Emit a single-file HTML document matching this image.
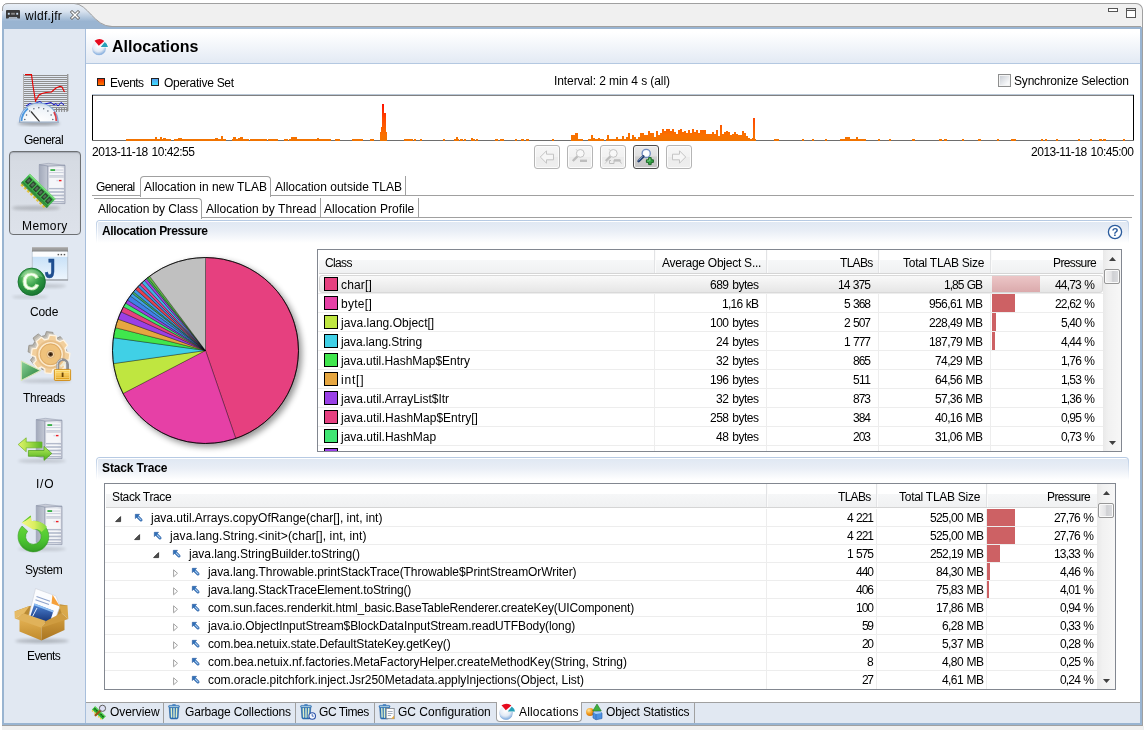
<!DOCTYPE html><html><head><meta charset="utf-8"><title>wldf.jfr - Allocations</title><style>
html,body{margin:0;padding:0;background:#fff}
body{width:1146px;height:732px;position:relative;overflow:hidden;font:12px "Liberation Sans",sans-serif;color:#000}
.a{position:absolute}
.t{position:absolute;white-space:pre;line-height:14px;height:14px;will-change:transform}
.b{font-weight:bold}
svg{position:absolute;overflow:visible}
</style></head><body>
<div class="a" style="left:2px;top:726px;width:1142px;height:4px;background:#f0f0f0;"></div>
<div class="a" style="left:2px;top:3px;width:1140px;height:24px;background:#f0f0f0;border-top:1px solid #a0a0a0;border-right:1px solid #a0a0a0;border-radius:6px 7px 0 0;height:23px"></div>
<div class="a" style="left:100px;top:26px;width:1041px;height:1px;background:#a0a0a0;"></div>
<div class="a" style="left:1142px;top:10px;width:1px;height:716px;background:#a0a0a0;"></div>
<div class="a" style="left:2px;top:725px;width:1141px;height:1px;background:#a0a0a0;"></div>
<div class="a" style="left:2px;top:27px;width:1140px;height:698px;background:#99b4d1;"></div>
<div class="a" style="left:4px;top:29px;width:81px;height:694px;background:#e1e8f2;"></div>
<div class="a" style="left:85px;top:29px;width:1px;height:694px;background:#a8bfdc;"></div>
<div class="a" style="left:86px;top:29px;width:1054px;height:673px;background:#fff;"></div>
<div class="a" style="left:86px;top:29px;width:1054px;height:34px;background:linear-gradient(#ffffff 10%,#e3eaf4 100%);"></div>
<div class="a" style="left:86px;top:63px;width:1054px;height:1px;background:#b4c8e1;"></div>
<div class="a" style="left:86px;top:702px;width:1054px;height:1px;background:#a0a0a0;"></div>
<div class="a" style="left:86px;top:703px;width:1054px;height:20px;background:#e1e8f2;"></div>
<svg style="left:2px;top:3px" width="116" height="26" viewBox="0 0 116 26">
<defs><linearGradient id="tg" x1="0" y1="0" x2="0" y2="1"><stop offset="0" stop-color="#e9eff7"/><stop offset="0.3" stop-color="#d9e3ef"/><stop offset="0.7" stop-color="#99b4d1"/><stop offset="1" stop-color="#99b4d1"/></linearGradient></defs>
<path d="M0 26 L0 6 Q0 0.5 6 0.5 L72 0.5 C86 0.5 92 23.5 110 23.5 L116 23.5 L116 26 Z" fill="url(#tg)"/>
<path d="M0.5 8 L0.5 6 Q0.5 0.5 6 0.5 L72 0.5 C86 0.5 92 23.5 110 23.5 L116 23.5" fill="none" stroke="#a0a0a0" stroke-width="1"/>
</svg>
<svg style="left:6px;top:10px" width="14" height="9.4" viewBox="0 0 15 10">
<path d="M1 0 H14 Q15 0 15 1 V9 H12.5 L11.5 7.5 H3.5 L2.5 9 H0 V1 Q0 0 1 0Z" fill="#3a3a3a"/>
<rect x="2" y="3" width="2" height="2" fill="#cfe3f7"/><rect x="11" y="3" width="2" height="2" fill="#cfe3f7"/><rect x="5.5" y="3" width="4" height="2" fill="#8a8a8a"/>
<path d="M3.5 9 L4.2 8 H10.8 L11.5 9Z" fill="#9a9a9a"/>
</svg>
<div class="t" style="top:9.14px;left:25.2px;letter-spacing:0.304px;">wldf.jfr</div>
<svg style="left:70px;top:10px" width="10" height="10" viewBox="0 0 10 10"><path d="M2 2 L8 8 M8 2 L2 8" stroke="#5a5a5a" stroke-width="3" stroke-linecap="square"/><path d="M2 2 L8 8 M8 2 L2 8" stroke="#fff" stroke-width="1.5" stroke-linecap="square"/></svg>
<svg style="left:1108px;top:8px" width="30" height="10" viewBox="0 0 30 10"><rect x="0.5" y="0.5" width="9" height="3" fill="#fff" stroke="#555"/><rect x="18.5" y="0.5" width="9" height="9" fill="#fff" stroke="#555"/><rect x="18.5" y="0.5" width="9" height="2" fill="#ddd" stroke="#555"/></svg>
<svg style="left:92px;top:39px" width="16" height="16" viewBox="0 0 16 16">
<defs><radialGradient id="pg" cx="0.45" cy="0.35" r="0.7"><stop offset="0" stop-color="#ffffff"/><stop offset="0.55" stop-color="#e2eaf5"/><stop offset="1" stop-color="#6f9fd6"/></radialGradient></defs>
<circle cx="7" cy="9.2" r="6.9" fill="url(#pg)"/>
<path d="M1.2 12.6 A6.9 6.9 0 0 0 12.9 12.4" fill="none" stroke="#8db5e4" stroke-width="0.9" opacity="0.9"/>
<path d="M6.8 6.7 L2.5 1.7 A8.5 8.5 0 0 1 12.4 1.9 Z" fill="#e60a1e" stroke="#ffffff" stroke-width="1.1" paint-order="stroke"/>
<path d="M8.7 7.9 L12.8 2.9 A8 8 0 0 1 16 7.9 Z" fill="#27a0b8" stroke="#ffffff" stroke-width="1.1" paint-order="stroke"/>
</svg>
<div class="t b" style="top:37.76px;font-size:16px;line-height:18px;height:18px;left:112.2px;letter-spacing:0.027px;">Allocations</div>
<div class="a" style="left:97px;top:78px;width:6px;height:6px;border:1px solid #222;background:linear-gradient(#f02800,#ff7a00)"></div>
<div class="t" style="top:76.14px;left:109.6px;letter-spacing:-0.517px;">Events</div>
<div class="a" style="left:151px;top:78px;width:6px;height:6px;border:1px solid #222;background:linear-gradient(#50a0f0,#40e0ff)"></div>
<div class="t" style="top:76.14px;left:164.4px;letter-spacing:-0.273px;">Operative Set</div>
<div class="t" style="top:74.14px;left:554.3px;letter-spacing:-0.085px;">Interval: 2 min 4 s (all)</div>
<div class="a" style="left:998px;top:74px;width:11px;height:11px;border:1px solid #8e8f8f;background:linear-gradient(135deg,#c4c9d1,#f8f9fa 78%);box-shadow:inset 0 0 0 1px #f4f4f4"></div>
<div class="t" style="top:74.14px;left:1014.3px;letter-spacing:-0.187px;">Synchronize Selection</div>
<div class="a" style="left:92px;top:94px;width:1042px;height:1px;background:#b9c7d6;"></div>
<div class="a" style="left:92px;top:95px;width:1042px;height:1px;background:#808080;"></div>
<div class="a" style="left:92px;top:95px;width:1px;height:46px;background:#000;"></div>
<div class="a" style="left:1133px;top:95px;width:1px;height:46px;background:#000;"></div>
<div class="a" style="left:92px;top:140px;width:1042px;height:1px;background:#6e6e6e;"></div>
<svg style="left:0;top:0" width="1146" height="142" viewBox="0 0 1146 142"><defs><linearGradient id="cg" gradientUnits="userSpaceOnUse" x1="0" y1="100" x2="0" y2="141"><stop offset="0" stop-color="#ff0000"/><stop offset="0.45" stop-color="#ff4800"/><stop offset="0.85" stop-color="#fa7000"/><stop offset="1" stop-color="#f07400"/></linearGradient></defs><g fill="url(#cg)"><rect x="126" y="139" width="45" height="2"/><rect x="155" y="137" width="2" height="4"/><rect x="160" y="137" width="2" height="4"/><rect x="163" y="138" width="3" height="3"/><rect x="174" y="139" width="52" height="2"/><rect x="178" y="138" width="4" height="3"/><rect x="215" y="138" width="3" height="3"/><rect x="221" y="136" width="2" height="5"/><rect x="232" y="139" width="17" height="2"/><rect x="233" y="137" width="3" height="4"/><rect x="238" y="138" width="2" height="3"/><rect x="240" y="137" width="3" height="4"/><rect x="250" y="139" width="17" height="2"/><rect x="268" y="139" width="10" height="2"/><rect x="284" y="139" width="4" height="2"/><rect x="289" y="139" width="42" height="2"/><rect x="291" y="137" width="2" height="4"/><rect x="293" y="137" width="4" height="4"/><rect x="317" y="138" width="2" height="3"/><rect x="335" y="139" width="5" height="2"/><rect x="352" y="139" width="11" height="2"/><rect x="370" y="139" width="4" height="2"/><rect x="380" y="132" width="7" height="9"/><rect x="381" y="127" width="5" height="14"/><rect x="404" y="139" width="9" height="2"/><rect x="414" y="139" width="2" height="2"/><rect x="420" y="139" width="2" height="2"/><rect x="443" y="139" width="2" height="2"/><rect x="454" y="139" width="5" height="2"/><rect x="456" y="137" width="2" height="4"/><rect x="460" y="139" width="3" height="2"/><rect x="464" y="139" width="2" height="2"/><rect x="471" y="138" width="2" height="3"/><rect x="473" y="139" width="2" height="2"/><rect x="476" y="139" width="2" height="2"/><rect x="495" y="139" width="3" height="2"/><rect x="500" y="139" width="4" height="2"/><rect x="515" y="139" width="2" height="2"/><rect x="521" y="139" width="3" height="2"/><rect x="526" y="139" width="3" height="2"/><rect x="552" y="139" width="2" height="2"/><rect x="571" y="139" width="12" height="2"/><rect x="571" y="135" width="4" height="6"/><rect x="575" y="133" width="3" height="8"/><rect x="588" y="139" width="16" height="2"/><rect x="591" y="135" width="2" height="6"/><rect x="593" y="138" width="2" height="3"/><rect x="598" y="138" width="2" height="3"/><rect x="606" y="139" width="6" height="2"/><rect x="607" y="135" width="2" height="6"/><rect x="612" y="139" width="2" height="2"/><rect x="614" y="139" width="2" height="2"/><rect x="616" y="137" width="2" height="4"/><rect x="618" y="139" width="2" height="2"/><rect x="620" y="139" width="2" height="2"/><rect x="622" y="136" width="2" height="5"/><rect x="624" y="139" width="2" height="2"/><rect x="626" y="137" width="2" height="4"/><rect x="628" y="133" width="2" height="8"/><rect x="630" y="139" width="2" height="2"/><rect x="632" y="135" width="2" height="6"/><rect x="634" y="137" width="2" height="4"/><rect x="636" y="139" width="2" height="2"/><rect x="638" y="137" width="2" height="4"/><rect x="640" y="133" width="2" height="8"/><rect x="642" y="133" width="2" height="8"/><rect x="644" y="135" width="2" height="6"/><rect x="646" y="135" width="2" height="6"/><rect x="648" y="131" width="2" height="10"/><rect x="650" y="133" width="2" height="8"/><rect x="652" y="133" width="2" height="8"/><rect x="654" y="137" width="2" height="4"/><rect x="656" y="131" width="2" height="10"/><rect x="658" y="135" width="2" height="6"/><rect x="660" y="133" width="2" height="8"/><rect x="662" y="129" width="2" height="12"/><rect x="664" y="131" width="2" height="10"/><rect x="666" y="129" width="2" height="12"/><rect x="668" y="129" width="2" height="12"/><rect x="670" y="131" width="2" height="10"/><rect x="672" y="129" width="2" height="12"/><rect x="674" y="132" width="2" height="9"/><rect x="676" y="134" width="2" height="7"/><rect x="678" y="130" width="2" height="11"/><rect x="680" y="129" width="2" height="12"/><rect x="682" y="132" width="2" height="9"/><rect x="684" y="131" width="2" height="10"/><rect x="686" y="133" width="2" height="8"/><rect x="688" y="130" width="2" height="11"/><rect x="690" y="133" width="2" height="8"/><rect x="692" y="129" width="2" height="12"/><rect x="694" y="132" width="2" height="9"/><rect x="696" y="130" width="2" height="11"/><rect x="698" y="133" width="2" height="8"/><rect x="700" y="130" width="2" height="11"/><rect x="702" y="130" width="2" height="11"/><rect x="704" y="130" width="2" height="11"/><rect x="706" y="134" width="2" height="7"/><rect x="708" y="134" width="2" height="7"/><rect x="710" y="134" width="2" height="7"/><rect x="712" y="132" width="2" height="9"/><rect x="714" y="134" width="2" height="7"/><rect x="716" y="130" width="2" height="11"/><rect x="718" y="136" width="2" height="5"/><rect x="720" y="125" width="2" height="16"/><rect x="722" y="134" width="2" height="7"/><rect x="724" y="132" width="2" height="9"/><rect x="726" y="131" width="2" height="10"/><rect x="728" y="132" width="2" height="9"/><rect x="730" y="135" width="2" height="6"/><rect x="732" y="134" width="2" height="7"/><rect x="734" y="132" width="2" height="9"/><rect x="736" y="134" width="2" height="7"/><rect x="738" y="135" width="2" height="6"/><rect x="740" y="135" width="2" height="6"/><rect x="742" y="131" width="2" height="10"/><rect x="744" y="133" width="2" height="8"/><rect x="746" y="136" width="2" height="5"/><rect x="748" y="138" width="2" height="3"/><rect x="750" y="139" width="2" height="2"/><rect x="752" y="138" width="2" height="3"/><rect x="752" y="139" width="4" height="2"/><rect x="774" y="139" width="5" height="2"/><rect x="802" y="139" width="2" height="2"/><rect x="812" y="139" width="2" height="2"/><rect x="825" y="139" width="2" height="2"/><rect x="840" y="139" width="26" height="2"/><rect x="845" y="137" width="5" height="4"/><rect x="856" y="137" width="2" height="4"/><rect x="878" y="139" width="2" height="2"/><rect x="889" y="139" width="2" height="2"/><rect x="912" y="139" width="3" height="2"/><rect x="939" y="139" width="3" height="2"/><rect x="944" y="139" width="3" height="2"/><rect x="962" y="139" width="2" height="2"/><rect x="978" y="139" width="3" height="2"/><rect x="997" y="139" width="2" height="2"/><rect x="1011" y="139" width="5" height="2"/><rect x="1041" y="139" width="2" height="2"/><rect x="1045" y="139" width="2" height="2"/><rect x="1056" y="139" width="2" height="2"/><rect x="1078" y="139" width="2" height="2"/><rect x="1090" y="139" width="2" height="2"/><rect x="1099" y="139" width="3" height="2"/><rect x="1103" y="139" width="3" height="2"/><rect x="1123" y="139" width="2" height="2"/><rect x="382" y="104" width="2" height="37"/><rect x="384" y="113" width="2" height="28"/><rect x="753" y="118" width="2" height="23"/></g></svg>
<div class="t" style="top:145.14px;left:91.6px;letter-spacing:-0.469px;word-spacing:0.9px;">2013-11-18 10:42:55</div>
<div class="t" style="top:145.14px;right:12.4px;margin-right:0.469px;letter-spacing:-0.469px;word-spacing:0.9px;">2013-11-18 10:45:00</div>
<div class="a" style="left:534px;top:145px;width:24px;height:22px;border:1px solid #b5b5b5;border-radius:3px;background:linear-gradient(#f6f6f6 0%,#f2f2f2 48%,#ececec 52%,#eeeeee 100%);box-shadow:inset 0 0 0 1px #fcfcfc"></div>
<div class="a" style="left:567px;top:145px;width:24px;height:22px;border:1px solid #b5b5b5;border-radius:3px;background:linear-gradient(#f6f6f6 0%,#f2f2f2 48%,#ececec 52%,#eeeeee 100%);box-shadow:inset 0 0 0 1px #fcfcfc"></div>
<div class="a" style="left:600px;top:145px;width:24px;height:22px;border:1px solid #b5b5b5;border-radius:3px;background:linear-gradient(#f6f6f6 0%,#f2f2f2 48%,#ececec 52%,#eeeeee 100%);box-shadow:inset 0 0 0 1px #fcfcfc"></div>
<div class="a" style="left:633px;top:145px;width:24px;height:22px;border:1px solid #4c4c4c;border-radius:3px;background:linear-gradient(#eaeaea 0%,#e0e0e0 45%,#cfcfcf 50%,#c4c4c4 100%);box-shadow:inset 0 0 0 1px #f4f4f4"></div>
<div class="a" style="left:666px;top:145px;width:24px;height:22px;border:1px solid #b5b5b5;border-radius:3px;background:linear-gradient(#f6f6f6 0%,#f2f2f2 48%,#ececec 52%,#eeeeee 100%);box-shadow:inset 0 0 0 1px #fcfcfc"></div>
<svg style="left:534px;top:145px" width="26" height="24" viewBox="0 0 26 24"><path d="M6.3 12 L12.5 5.8 V9.2 H19.5 V14.8 H12.5 V18.2 Z" fill="#f6f6f6" stroke="#c4c4c4" stroke-width="1"/></svg>
<svg style="left:567px;top:145px" width="26" height="24" viewBox="0 0 26 24"><circle cx="13.3" cy="8.4" r="3.9" fill="#f8f8f8" stroke="#c4c4c4" stroke-width="1"/><path d="M10.4 11.4 L5.8 16" stroke="#bdbdbd" stroke-width="2.4"/><path d="M10 5.5 L9 4.2" stroke="#c4c4c4" stroke-width="0.8"/><rect x="13" y="14.6" width="7" height="2.4" fill="#bdbdbd"/></svg>
<svg style="left:600px;top:145px" width="26" height="24" viewBox="0 0 26 24"><circle cx="13.3" cy="8.4" r="3.9" fill="#f8f8f8" stroke="#c4c4c4" stroke-width="1"/><path d="M10.4 11.4 L5.8 16" stroke="#bdbdbd" stroke-width="2.4"/><path d="M10 5.5 L9 4.2" stroke="#c4c4c4" stroke-width="0.8"/><path d="M9.5 13.5 L4.8 18.8" stroke="#c8c8c8" stroke-width="0.8"/><path d="M11 15.5 H9.5 V18.5 H14 V15 H20 V16.5 L21.5 18.5" fill="none" stroke="#bdbdbd" stroke-width="1"/><rect x="14" y="14.4" width="6.5" height="2.2" fill="#bdbdbd"/></svg>
<svg style="left:633px;top:145px" width="26" height="24" viewBox="0 0 26 24"><defs><linearGradient id="hz" x1="0" y1="0" x2="1" y2="1"><stop offset="0" stop-color="#8aa3cf"/><stop offset="1" stop-color="#1f3a6e"/></linearGradient></defs>
<circle cx="13.2" cy="8.4" r="4.1" fill="#f4f8ff" stroke="#6f8bc0" stroke-width="1.3"/><circle cx="13.2" cy="8.4" r="2.6" fill="#ffffff" opacity="0.9"/>
<path d="M10.3 11.5 L5.6 16.2" stroke="#24406f" stroke-width="2.6" stroke-linecap="round"/><path d="M9.8 11.3 L5.6 15.5" stroke="#8ea6d2" stroke-width="0.9"/>
<path d="M15.6 12.6 h2.6 v2.2 h2.2 v2.6 h-2.2 v2.2 h-2.6 v-2.2 h-2.2 v-2.6 h2.2 z" fill="#36a546" stroke="#14601f" stroke-width="0.9"/><path d="M16.2 13.4 h1.2 v2.4 h-1.2z M14.2 15.4 h2 v1 h-2z" fill="#8fe09a" opacity="0.8"/></svg>
<svg style="left:666px;top:145px" width="26" height="24" viewBox="0 0 26 24"><path d="M19.7 12 L13.5 5.8 V9.2 H6.5 V14.8 H13.5 V18.2 Z" fill="#f6f6f6" stroke="#c4c4c4" stroke-width="1"/></svg>
<div class="a" style="left:92px;top:195px;width:1042px;height:1px;background:#a0a0a0;"></div>
<div class="t" style="top:180.14px;left:95.9px;letter-spacing:-0.584px;">General</div>
<div class="a" style="left:140px;top:176px;width:129px;height:20px;border:1px solid #a0a0a0;border-bottom:none;border-radius:4px 4px 0 0;background:#fff"></div>
<div class="t" style="top:180.14px;left:144.2px;letter-spacing:-0.009px;">Allocation in new TLAB</div>
<div class="t" style="top:180.14px;left:275.3px;letter-spacing:-0.009px;">Allocation outside TLAB</div>
<div class="a" style="left:405px;top:176px;width:1px;height:19px;background:#a0a0a0;"></div>
<div class="a" style="left:201px;top:217px;width:931px;height:1px;background:#a0a0a0;"></div>
<div class="a" style="left:94px;top:198px;width:107px;height:20px;border:1px solid #a0a0a0;border-bottom:none;border-left:none;border-radius:0 4px 0 0;background:#fff"></div>
<div class="t" style="top:202.14px;left:98.0px;letter-spacing:-0.077px;">Allocation by Class</div>
<div class="t" style="top:202.14px;left:206.0px;letter-spacing:0.064px;">Allocation by Thread</div>
<div class="a" style="left:320px;top:198px;width:1px;height:19px;background:#a0a0a0;"></div>
<div class="t" style="top:202.14px;left:324.4px;letter-spacing:0.053px;">Allocation Profile</div>
<div class="a" style="left:418px;top:198px;width:1px;height:19px;background:#a0a0a0;"></div>
<div class="a" style="left:96px;top:220px;width:1033px;height:23px;border-radius:4px 4px 0 0;background:linear-gradient(#b5c9e3,#ffffff)"></div>
<div class="a" style="left:97px;top:221px;width:1031px;height:22px;border-radius:3px 3px 0 0;background:linear-gradient(#ffffff 0,#ffffff 1px,#e0e8f3 1px,#e9eef6 45%,#ffffff 100%);box-shadow:inset 1px 0 0 rgba(255,255,255,.8)"></div>
<div class="t b" style="top:224.14px;left:101.6px;letter-spacing:-0.373px;">Allocation Pressure</div>
<div class="a" style="left:96px;top:457px;width:1033px;height:23px;border-radius:4px 4px 0 0;background:linear-gradient(#b5c9e3,#ffffff)"></div>
<div class="a" style="left:97px;top:458px;width:1031px;height:22px;border-radius:3px 3px 0 0;background:linear-gradient(#ffffff 0,#ffffff 1px,#e0e8f3 1px,#e9eef6 45%,#ffffff 100%);box-shadow:inset 1px 0 0 rgba(255,255,255,.8)"></div>
<div class="t b" style="top:461.14px;left:101.6px;letter-spacing:-0.122px;">Stack Trace</div>
<svg style="left:1107px;top:224px;will-change:transform" width="16" height="16" viewBox="0 0 16 16"><circle cx="8" cy="8" r="6.6" fill="#fdfeff" stroke="#2a5b9c" stroke-width="1.3"/><text x="8" y="12" text-anchor="middle" font-family="Liberation Sans, sans-serif" font-size="11" font-weight="bold" fill="#2a5b9c">?</text></svg>
<svg style="left:0;top:0" width="320" height="460" viewBox="0 0 320 460"><defs><filter id="ps" x="-20%" y="-20%" width="140%" height="140%"><feGaussianBlur stdDeviation="3"/></filter></defs><circle cx="208.5" cy="353.5" r="93.5" fill="#000" opacity="0.42" filter="url(#ps)"/><path d="M205.5 350.5 L205.50 257.50 A93 93 0 0 1 235.73 438.45 Z" fill="#e6407f" stroke="#000" stroke-opacity="0.55" stroke-width="0.6" stroke-linejoin="round"/><path d="M205.5 350.5 L235.73 438.45 A93 93 0 0 1 123.04 393.50 Z" fill="#e640a6" stroke="#000" stroke-opacity="0.55" stroke-width="0.6" stroke-linejoin="round"/><path d="M205.5 350.5 L123.04 393.50 A93 93 0 0 1 113.43 363.60 Z" fill="#bfe640" stroke="#000" stroke-opacity="0.55" stroke-width="0.6" stroke-linejoin="round"/><path d="M205.5 350.5 L113.43 363.60 A93 93 0 0 1 113.38 337.74 Z" fill="#40d0e6" stroke="#000" stroke-opacity="0.55" stroke-width="0.6" stroke-linejoin="round"/><path d="M205.5 350.5 L113.38 337.74 A93 93 0 0 1 115.35 327.65 Z" fill="#40e64d" stroke="#000" stroke-opacity="0.55" stroke-width="0.6" stroke-linejoin="round"/><path d="M205.5 350.5 L115.35 327.65 A93 93 0 0 1 117.96 319.11 Z" fill="#e6a640" stroke="#000" stroke-opacity="0.55" stroke-width="0.6" stroke-linejoin="round"/><path d="M205.5 350.5 L117.96 319.11 A93 93 0 0 1 120.96 311.75 Z" fill="#9a40e6" stroke="#000" stroke-opacity="0.55" stroke-width="0.6" stroke-linejoin="round"/><path d="M205.5 350.5 L120.96 311.75 A93 93 0 0 1 123.42 306.78 Z" fill="#e64080" stroke="#000" stroke-opacity="0.55" stroke-width="0.6" stroke-linejoin="round"/><path d="M205.5 350.5 L123.42 306.78 A93 93 0 0 1 125.51 303.06 Z" fill="#40e673" stroke="#000" stroke-opacity="0.55" stroke-width="0.6" stroke-linejoin="round"/><path d="M205.5 350.5 L125.51 303.06 A93 93 0 0 1 127.42 299.98 Z" fill="#9a40e6" stroke="#000" stroke-opacity="0.55" stroke-width="0.6" stroke-linejoin="round"/><path d="M205.5 350.5 L127.42 299.98 A93 93 0 0 1 130.23 295.88 Z" fill="#4080e6" stroke="#000" stroke-opacity="0.55" stroke-width="0.6" stroke-linejoin="round"/><path d="M205.5 350.5 L130.23 295.88 A93 93 0 0 1 132.16 293.32 Z" fill="#40a0e6" stroke="#000" stroke-opacity="0.55" stroke-width="0.6" stroke-linejoin="round"/><path d="M205.5 350.5 L132.16 293.32 A93 93 0 0 1 133.43 291.72 Z" fill="#40b060" stroke="#000" stroke-opacity="0.55" stroke-width="0.6" stroke-linejoin="round"/><path d="M205.5 350.5 L133.43 291.72 A93 93 0 0 1 135.51 289.26 Z" fill="#4098e6" stroke="#000" stroke-opacity="0.55" stroke-width="0.6" stroke-linejoin="round"/><path d="M205.5 350.5 L135.51 289.26 A93 93 0 0 1 137.87 286.67 Z" fill="#e64050" stroke="#000" stroke-opacity="0.55" stroke-width="0.6" stroke-linejoin="round"/><path d="M205.5 350.5 L137.87 286.67 A93 93 0 0 1 139.70 284.78 Z" fill="#4090e0" stroke="#000" stroke-opacity="0.55" stroke-width="0.6" stroke-linejoin="round"/><path d="M205.5 350.5 L139.70 284.78 A93 93 0 0 1 141.79 282.75 Z" fill="#e64090" stroke="#000" stroke-opacity="0.55" stroke-width="0.6" stroke-linejoin="round"/><path d="M205.5 350.5 L141.79 282.75 A93 93 0 0 1 144.39 280.39 Z" fill="#40b0e6" stroke="#000" stroke-opacity="0.55" stroke-width="0.6" stroke-linejoin="round"/><path d="M205.5 350.5 L144.39 280.39 A93 93 0 0 1 146.40 278.69 Z" fill="#a040e6" stroke="#000" stroke-opacity="0.55" stroke-width="0.6" stroke-linejoin="round"/><path d="M205.5 350.5 L146.40 278.69 A93 93 0 0 1 147.76 277.59 Z" fill="#40c060" stroke="#000" stroke-opacity="0.55" stroke-width="0.6" stroke-linejoin="round"/><path d="M205.5 350.5 L147.76 277.59 A93 93 0 0 1 149.61 276.16 Z" fill="#60c040" stroke="#000" stroke-opacity="0.55" stroke-width="0.6" stroke-linejoin="round"/><path d="M205.5 350.5 L149.61 276.16 A93 93 0 0 1 205.50 257.50 Z" fill="#c0c0c0" stroke="#000" stroke-opacity="0.55" stroke-width="0.6" stroke-linejoin="round"/><circle cx="205.5" cy="350.5" r="93" fill="none" stroke="#000" stroke-width="1" stroke-opacity="0.85"/></svg>
<div class="a" style="left:317px;top:249px;width:803px;height:201px;border:1px solid #828790;background:#fff"></div>
<div class="a" style="left:319px;top:250px;width:784px;height:23px;background:linear-gradient(#ffffff 0,#ffffff 10px,#f6f7f8 10px,#f0f1f2 100%);"></div>
<div class="a" style="left:319px;top:273px;width:784px;height:1px;background:#d5d5d5;"></div>
<div class="a" style="left:654px;top:250px;width:1px;height:23px;background:#e2e3e5;"></div>
<div class="a" style="left:655px;top:250px;width:1px;height:23px;background:#fbfbfb;"></div>
<div class="a" style="left:766px;top:250px;width:1px;height:23px;background:#e2e3e5;"></div>
<div class="a" style="left:767px;top:250px;width:1px;height:23px;background:#fbfbfb;"></div>
<div class="a" style="left:878px;top:250px;width:1px;height:23px;background:#e2e3e5;"></div>
<div class="a" style="left:879px;top:250px;width:1px;height:23px;background:#fbfbfb;"></div>
<div class="a" style="left:990px;top:250px;width:1px;height:23px;background:#e2e3e5;"></div>
<div class="a" style="left:991px;top:250px;width:1px;height:23px;background:#fbfbfb;"></div>
<div class="t" style="top:256.14px;left:325.3px;letter-spacing:-0.629px;">Class</div>
<div class="t" style="top:256.14px;left:661.6px;letter-spacing:-0.247px;">Average Object S...</div>
<div class="t" style="top:256.14px;right:273.2px;margin-right:0.704px;letter-spacing:-0.704px;">TLABs</div>
<div class="t" style="top:256.14px;right:161.2px;margin-right:0.268px;letter-spacing:-0.268px;">Total TLAB Size</div>
<div class="t" style="top:256.14px;right:49.3px;margin-right:0.619px;letter-spacing:-0.619px;">Pressure</div>
<div class="a" style="left:654px;top:275px;width:1px;height:176px;background:#ededed;"></div>
<div class="a" style="left:766px;top:275px;width:1px;height:176px;background:#ededed;"></div>
<div class="a" style="left:878px;top:275px;width:1px;height:176px;background:#ededed;"></div>
<div class="a" style="left:990px;top:275px;width:1px;height:176px;background:#ededed;"></div>
<div class="a" style="left:318px;top:293px;width:785px;height:1px;background:#ededed;"></div>
<div class="a" style="left:319px;top:275px;width:782px;height:16px;border:1px solid #d9d9d9;border-radius:3px;background:linear-gradient(#f9f9f9,#e6e6e6)"></div>
<div class="a" style="left:992px;top:276px;width:48px;height:16px;background:linear-gradient(#ecc6c7,#dbaaac);"></div>
<div class="a" style="left:324px;top:277px;width:12px;height:12px;border:1px solid #000;background:#e6407f"></div>
<div class="t" style="top:278.14px;left:341.3px;letter-spacing:0.157px;">char[]</div>
<div class="t" style="top:278.14px;right:387.2px;margin-right:0.493px;letter-spacing:-0.493px;word-spacing:0.9px;">689 bytes</div>
<div class="t" style="top:278.14px;right:275.0px;margin-right:0.921px;letter-spacing:-0.921px;word-spacing:0.9px;">14 375</div>
<div class="t" style="top:278.14px;right:163.5px;margin-right:0.989px;letter-spacing:-0.989px;word-spacing:0.9px;">1,85 GB</div>
<div class="t" style="top:278.14px;right:51.0px;margin-right:0.824px;letter-spacing:-0.824px;word-spacing:0.9px;">44,73 %</div>
<div class="a" style="left:318px;top:312px;width:785px;height:1px;background:#ededed;"></div>
<div class="a" style="left:992px;top:294px;width:23px;height:18px;background:#cd6164;"></div>
<div class="a" style="left:324px;top:296px;width:12px;height:12px;border:1px solid #000;background:#e640a6"></div>
<div class="t" style="top:297.14px;left:341.3px;letter-spacing:0.288px;">byte[]</div>
<div class="t" style="top:297.14px;right:387.2px;margin-right:0.767px;letter-spacing:-0.767px;word-spacing:0.9px;">1,16 kB</div>
<div class="t" style="top:297.14px;right:275.0px;margin-right:0.983px;letter-spacing:-0.983px;word-spacing:0.9px;">5 368</div>
<div class="t" style="top:297.14px;right:163.5px;margin-right:0.618px;letter-spacing:-0.618px;word-spacing:0.9px;">956,61 MB</div>
<div class="t" style="top:297.14px;right:51.0px;margin-right:0.824px;letter-spacing:-0.824px;word-spacing:0.9px;">22,62 %</div>
<div class="a" style="left:318px;top:331px;width:785px;height:1px;background:#ededed;"></div>
<div class="a" style="left:992px;top:313px;width:4px;height:18px;background:#cd6164;"></div>
<div class="a" style="left:324px;top:315px;width:12px;height:12px;border:1px solid #000;background:#bfe640"></div>
<div class="t" style="top:316.14px;left:341.3px;letter-spacing:0.028px;">java.lang.Object[]</div>
<div class="t" style="top:316.14px;right:387.2px;margin-right:0.493px;letter-spacing:-0.493px;word-spacing:0.9px;">100 bytes</div>
<div class="t" style="top:316.14px;right:275.0px;margin-right:0.983px;letter-spacing:-0.983px;word-spacing:0.9px;">2 507</div>
<div class="t" style="top:316.14px;right:163.5px;margin-right:0.618px;letter-spacing:-0.618px;word-spacing:0.9px;">228,49 MB</div>
<div class="t" style="top:316.14px;right:51.0px;margin-right:0.852px;letter-spacing:-0.852px;word-spacing:0.9px;">5,40 %</div>
<div class="a" style="left:318px;top:350px;width:785px;height:1px;background:#ededed;"></div>
<div class="a" style="left:992px;top:332px;width:3px;height:18px;background:#cd6164;"></div>
<div class="a" style="left:324px;top:334px;width:12px;height:12px;border:1px solid #000;background:#40d0e6"></div>
<div class="t" style="top:335.14px;left:341.3px;letter-spacing:-0.108px;">java.lang.String</div>
<div class="t" style="top:335.14px;right:387.2px;margin-right:0.468px;letter-spacing:-0.468px;word-spacing:0.9px;">24 bytes</div>
<div class="t" style="top:335.14px;right:275.0px;margin-right:0.983px;letter-spacing:-0.983px;word-spacing:0.9px;">1 777</div>
<div class="t" style="top:335.14px;right:163.5px;margin-right:0.618px;letter-spacing:-0.618px;word-spacing:0.9px;">187,79 MB</div>
<div class="t" style="top:335.14px;right:51.0px;margin-right:0.852px;letter-spacing:-0.852px;word-spacing:0.9px;">4,44 %</div>
<div class="a" style="left:318px;top:369px;width:785px;height:1px;background:#ededed;"></div>
<div class="a" style="left:324px;top:353px;width:12px;height:12px;border:1px solid #000;background:#40e64d"></div>
<div class="t" style="top:354.14px;left:341.3px;letter-spacing:-0.053px;">java.util.HashMap$Entry</div>
<div class="t" style="top:354.14px;right:387.2px;margin-right:0.468px;letter-spacing:-0.468px;word-spacing:0.9px;">32 bytes</div>
<div class="t" style="top:354.14px;right:275.0px;margin-right:1.016px;letter-spacing:-1.016px;word-spacing:0.9px;">865</div>
<div class="t" style="top:354.14px;right:163.5px;margin-right:0.611px;letter-spacing:-0.611px;word-spacing:0.9px;">74,29 MB</div>
<div class="t" style="top:354.14px;right:51.0px;margin-right:0.852px;letter-spacing:-0.852px;word-spacing:0.9px;">1,76 %</div>
<div class="a" style="left:318px;top:388px;width:785px;height:1px;background:#ededed;"></div>
<div class="a" style="left:324px;top:372px;width:12px;height:12px;border:1px solid #000;background:#e6a640"></div>
<div class="t" style="top:373.14px;left:341.3px;letter-spacing:0.814px;">int[]</div>
<div class="t" style="top:373.14px;right:387.2px;margin-right:0.493px;letter-spacing:-0.493px;word-spacing:0.9px;">196 bytes</div>
<div class="t" style="top:373.14px;right:275.0px;margin-right:0.57px;letter-spacing:-0.57px;word-spacing:0.9px;">511</div>
<div class="t" style="top:373.14px;right:163.5px;margin-right:0.611px;letter-spacing:-0.611px;word-spacing:0.9px;">64,56 MB</div>
<div class="t" style="top:373.14px;right:51.0px;margin-right:0.852px;letter-spacing:-0.852px;word-spacing:0.9px;">1,53 %</div>
<div class="a" style="left:318px;top:407px;width:785px;height:1px;background:#ededed;"></div>
<div class="a" style="left:324px;top:391px;width:12px;height:12px;border:1px solid #000;background:#9a40e6"></div>
<div class="t" style="top:392.14px;left:341.3px;letter-spacing:-0.032px;">java.util.ArrayList$Itr</div>
<div class="t" style="top:392.14px;right:387.2px;margin-right:0.468px;letter-spacing:-0.468px;word-spacing:0.9px;">32 bytes</div>
<div class="t" style="top:392.14px;right:275.0px;margin-right:1.016px;letter-spacing:-1.016px;word-spacing:0.9px;">873</div>
<div class="t" style="top:392.14px;right:163.5px;margin-right:0.611px;letter-spacing:-0.611px;word-spacing:0.9px;">57,36 MB</div>
<div class="t" style="top:392.14px;right:51.0px;margin-right:0.852px;letter-spacing:-0.852px;word-spacing:0.9px;">1,36 %</div>
<div class="a" style="left:318px;top:426px;width:785px;height:1px;background:#ededed;"></div>
<div class="a" style="left:324px;top:410px;width:12px;height:12px;border:1px solid #000;background:#e64080"></div>
<div class="t" style="top:411.14px;left:341.3px;letter-spacing:0.003px;">java.util.HashMap$Entry[]</div>
<div class="t" style="top:411.14px;right:387.2px;margin-right:0.493px;letter-spacing:-0.493px;word-spacing:0.9px;">258 bytes</div>
<div class="t" style="top:411.14px;right:275.0px;margin-right:1.016px;letter-spacing:-1.016px;word-spacing:0.9px;">384</div>
<div class="t" style="top:411.14px;right:163.5px;margin-right:0.611px;letter-spacing:-0.611px;word-spacing:0.9px;">40,16 MB</div>
<div class="t" style="top:411.14px;right:51.0px;margin-right:0.852px;letter-spacing:-0.852px;word-spacing:0.9px;">0,95 %</div>
<div class="a" style="left:318px;top:445px;width:785px;height:1px;background:#ededed;"></div>
<div class="a" style="left:324px;top:429px;width:12px;height:12px;border:1px solid #000;background:#40e673"></div>
<div class="t" style="top:430.14px;left:341.3px;letter-spacing:-0.012px;">java.util.HashMap</div>
<div class="t" style="top:430.14px;right:387.2px;margin-right:0.468px;letter-spacing:-0.468px;word-spacing:0.9px;">48 bytes</div>
<div class="t" style="top:430.14px;right:275.0px;margin-right:1.016px;letter-spacing:-1.016px;word-spacing:0.9px;">203</div>
<div class="t" style="top:430.14px;right:163.5px;margin-right:0.611px;letter-spacing:-0.611px;word-spacing:0.9px;">31,06 MB</div>
<div class="t" style="top:430.14px;right:51.0px;margin-right:0.852px;letter-spacing:-0.852px;word-spacing:0.9px;">0,73 %</div>
<div class="a" style="left:324px;top:448px;width:12px;height:2px;border:1px solid #000;border-bottom:none;background:#9a40e6"></div>
<div class="a" style="left:1103px;top:250px;width:18px;height:201px;background:linear-gradient(90deg,#e9e9e9 0,#f1f1f1 30%,#f7f7f7 100%);"></div>
<svg style="left:1103px;top:250px" width="18" height="17" viewBox="0 0 18 17"><path d="M6.0 11 L9.5 7 L13.0 11 Z" fill="#404040"/></svg>
<svg style="left:1103px;top:434px" width="18" height="17" viewBox="0 0 18 17"><path d="M6.0 7 L9.5 11 L13.0 7 Z" fill="#404040"/></svg>
<div class="a" style="left:1104px;top:269px;width:14px;height:13px;border:1px solid #979797;border-radius:2px;background:linear-gradient(90deg,#f2f2f2 0,#e4e4e6 45%,#cfd0d3 55%,#dcdde0 100%);box-shadow:inset 0 0 0 1px #fafafa"></div>
<div class="a" style="left:104px;top:483px;width:1010px;height:205px;border:1px solid #828790;background:#fff"></div>
<div class="a" style="left:106px;top:484px;width:991px;height:23px;background:linear-gradient(#ffffff 0,#ffffff 10px,#f6f7f8 10px,#f0f1f2 100%);"></div>
<div class="a" style="left:106px;top:507px;width:991px;height:1px;background:#d5d5d5;"></div>
<div class="a" style="left:766px;top:484px;width:1px;height:23px;background:#e2e3e5;"></div>
<div class="a" style="left:767px;top:484px;width:1px;height:23px;background:#fbfbfb;"></div>
<div class="a" style="left:876px;top:484px;width:1px;height:23px;background:#e2e3e5;"></div>
<div class="a" style="left:877px;top:484px;width:1px;height:23px;background:#fbfbfb;"></div>
<div class="a" style="left:986px;top:484px;width:1px;height:23px;background:#e2e3e5;"></div>
<div class="a" style="left:987px;top:484px;width:1px;height:23px;background:#fbfbfb;"></div>
<div class="t" style="top:490.14px;left:112.4px;letter-spacing:-0.376px;">Stack Trace</div>
<div class="t" style="top:490.14px;right:275.0px;margin-right:0.704px;letter-spacing:-0.704px;">TLABs</div>
<div class="t" style="top:490.14px;right:165.5px;margin-right:0.268px;letter-spacing:-0.268px;">Total TLAB Size</div>
<div class="t" style="top:490.14px;right:55.8px;margin-right:0.619px;letter-spacing:-0.619px;">Pressure</div>
<div class="a" style="left:766px;top:509px;width:1px;height:180px;background:#ededed;"></div>
<div class="a" style="left:876px;top:509px;width:1px;height:180px;background:#ededed;"></div>
<div class="a" style="left:986px;top:509px;width:1px;height:180px;background:#ededed;"></div>
<div class="a" style="left:105px;top:526px;width:992px;height:1px;background:#ededed;"></div>
<div class="a" style="left:987px;top:509px;width:28px;height:17px;background:#cd6164;"></div>
<svg style="left:115px;top:516px" width="6" height="6" viewBox="0 0 6 6"><path d="M5.6 0.6 V5.6 H0.6 Z" fill="#505050" stroke="#2a2a2a" stroke-width="0.8" stroke-linejoin="round"/></svg>
<svg style="left:134.8px;top:514px" width="8" height="8" viewBox="0 0 8 8"><path d="M0.3 0.3 H4.6 L3.4 1.6 L7 5.2 Q7.6 6.2 6.8 6.9 Q6 7.5 5.1 6.9 L1.6 3.4 L0.3 4.6 Z" fill="#2f6fb8" stroke="#1c4f94" stroke-width="0.5"/><path d="M3.3 3.2 L6 5.9" stroke="#a9cdf2" stroke-width="1.1" stroke-linecap="round"/></svg>
<div class="t" style="top:511.14px;left:151.0px;letter-spacing:-0.015px;">java.util.Arrays.copyOfRange(char[], int, int)</div>
<div class="t" style="top:511.14px;right:272.0px;margin-right:0.983px;letter-spacing:-0.983px;word-spacing:0.9px;">4 221</div>
<div class="t" style="top:511.14px;right:162.5px;margin-right:0.618px;letter-spacing:-0.618px;word-spacing:0.9px;">525,00 MB</div>
<div class="t" style="top:511.14px;right:52.0px;margin-right:0.824px;letter-spacing:-0.824px;word-spacing:0.9px;">27,76 %</div>
<div class="a" style="left:105px;top:544px;width:992px;height:1px;background:#ededed;"></div>
<div class="a" style="left:987px;top:527px;width:28px;height:17px;background:#cd6164;"></div>
<svg style="left:134px;top:534px" width="6" height="6" viewBox="0 0 6 6"><path d="M5.6 0.6 V5.6 H0.6 Z" fill="#505050" stroke="#2a2a2a" stroke-width="0.8" stroke-linejoin="round"/></svg>
<svg style="left:153.8px;top:532px" width="8" height="8" viewBox="0 0 8 8"><path d="M0.3 0.3 H4.6 L3.4 1.6 L7 5.2 Q7.6 6.2 6.8 6.9 Q6 7.5 5.1 6.9 L1.6 3.4 L0.3 4.6 Z" fill="#2f6fb8" stroke="#1c4f94" stroke-width="0.5"/><path d="M3.3 3.2 L6 5.9" stroke="#a9cdf2" stroke-width="1.1" stroke-linecap="round"/></svg>
<div class="t" style="top:529.14px;left:170.0px;letter-spacing:0.11px;">java.lang.String.&lt;init&gt;(char[], int, int)</div>
<div class="t" style="top:529.14px;right:272.0px;margin-right:0.983px;letter-spacing:-0.983px;word-spacing:0.9px;">4 221</div>
<div class="t" style="top:529.14px;right:162.5px;margin-right:0.618px;letter-spacing:-0.618px;word-spacing:0.9px;">525,00 MB</div>
<div class="t" style="top:529.14px;right:52.0px;margin-right:0.824px;letter-spacing:-0.824px;word-spacing:0.9px;">27,76 %</div>
<div class="a" style="left:105px;top:562px;width:992px;height:1px;background:#ededed;"></div>
<div class="a" style="left:987px;top:545px;width:13px;height:17px;background:#cd6164;"></div>
<svg style="left:153px;top:552px" width="6" height="6" viewBox="0 0 6 6"><path d="M5.6 0.6 V5.6 H0.6 Z" fill="#505050" stroke="#2a2a2a" stroke-width="0.8" stroke-linejoin="round"/></svg>
<svg style="left:172.8px;top:550px" width="8" height="8" viewBox="0 0 8 8"><path d="M0.3 0.3 H4.6 L3.4 1.6 L7 5.2 Q7.6 6.2 6.8 6.9 Q6 7.5 5.1 6.9 L1.6 3.4 L0.3 4.6 Z" fill="#2f6fb8" stroke="#1c4f94" stroke-width="0.5"/><path d="M3.3 3.2 L6 5.9" stroke="#a9cdf2" stroke-width="1.1" stroke-linecap="round"/></svg>
<div class="t" style="top:547.14px;left:189.0px;letter-spacing:-0.033px;">java.lang.StringBuilder.toString()</div>
<div class="t" style="top:547.14px;right:272.0px;margin-right:0.983px;letter-spacing:-0.983px;word-spacing:0.9px;">1 575</div>
<div class="t" style="top:547.14px;right:162.5px;margin-right:0.618px;letter-spacing:-0.618px;word-spacing:0.9px;">252,19 MB</div>
<div class="t" style="top:547.14px;right:52.0px;margin-right:0.824px;letter-spacing:-0.824px;word-spacing:0.9px;">13,33 %</div>
<div class="a" style="left:105px;top:580px;width:992px;height:1px;background:#ededed;"></div>
<div class="a" style="left:987px;top:563px;width:3px;height:17px;background:#cd6164;"></div>
<svg style="left:173px;top:569px" width="6" height="9" viewBox="0 0 6 9"><path d="M0.6 0.8 L4.5 4.3 L0.6 7.8 Z" fill="#fff" stroke="#a3a3a3" stroke-width="1"/></svg>
<svg style="left:191.8px;top:568px" width="8" height="8" viewBox="0 0 8 8"><path d="M0.3 0.3 H4.6 L3.4 1.6 L7 5.2 Q7.6 6.2 6.8 6.9 Q6 7.5 5.1 6.9 L1.6 3.4 L0.3 4.6 Z" fill="#2f6fb8" stroke="#1c4f94" stroke-width="0.5"/><path d="M3.3 3.2 L6 5.9" stroke="#a9cdf2" stroke-width="1.1" stroke-linecap="round"/></svg>
<div class="t" style="top:565.14px;left:208.0px;letter-spacing:-0.075px;">java.lang.Throwable.printStackTrace(Throwable$PrintStreamOrWriter)</div>
<div class="t" style="top:565.14px;right:272.0px;margin-right:1.016px;letter-spacing:-1.016px;word-spacing:0.9px;">440</div>
<div class="t" style="top:565.14px;right:162.5px;margin-right:0.611px;letter-spacing:-0.611px;word-spacing:0.9px;">84,30 MB</div>
<div class="t" style="top:565.14px;right:52.0px;margin-right:0.852px;letter-spacing:-0.852px;word-spacing:0.9px;">4,46 %</div>
<div class="a" style="left:105px;top:598px;width:992px;height:1px;background:#ededed;"></div>
<div class="a" style="left:987px;top:581px;width:2px;height:17px;background:#cd6164;"></div>
<svg style="left:173px;top:587px" width="6" height="9" viewBox="0 0 6 9"><path d="M0.6 0.8 L4.5 4.3 L0.6 7.8 Z" fill="#fff" stroke="#a3a3a3" stroke-width="1"/></svg>
<svg style="left:191.8px;top:586px" width="8" height="8" viewBox="0 0 8 8"><path d="M0.3 0.3 H4.6 L3.4 1.6 L7 5.2 Q7.6 6.2 6.8 6.9 Q6 7.5 5.1 6.9 L1.6 3.4 L0.3 4.6 Z" fill="#2f6fb8" stroke="#1c4f94" stroke-width="0.5"/><path d="M3.3 3.2 L6 5.9" stroke="#a9cdf2" stroke-width="1.1" stroke-linecap="round"/></svg>
<div class="t" style="top:583.14px;left:208.0px;letter-spacing:-0.135px;">java.lang.StackTraceElement.toString()</div>
<div class="t" style="top:583.14px;right:272.0px;margin-right:1.016px;letter-spacing:-1.016px;word-spacing:0.9px;">406</div>
<div class="t" style="top:583.14px;right:162.5px;margin-right:0.611px;letter-spacing:-0.611px;word-spacing:0.9px;">75,83 MB</div>
<div class="t" style="top:583.14px;right:52.0px;margin-right:0.852px;letter-spacing:-0.852px;word-spacing:0.9px;">4,01 %</div>
<div class="a" style="left:105px;top:616px;width:992px;height:1px;background:#ededed;"></div>
<svg style="left:173px;top:605px" width="6" height="9" viewBox="0 0 6 9"><path d="M0.6 0.8 L4.5 4.3 L0.6 7.8 Z" fill="#fff" stroke="#a3a3a3" stroke-width="1"/></svg>
<svg style="left:191.8px;top:604px" width="8" height="8" viewBox="0 0 8 8"><path d="M0.3 0.3 H4.6 L3.4 1.6 L7 5.2 Q7.6 6.2 6.8 6.9 Q6 7.5 5.1 6.9 L1.6 3.4 L0.3 4.6 Z" fill="#2f6fb8" stroke="#1c4f94" stroke-width="0.5"/><path d="M3.3 3.2 L6 5.9" stroke="#a9cdf2" stroke-width="1.1" stroke-linecap="round"/></svg>
<div class="t" style="top:601.14px;left:208.0px;letter-spacing:-0.135px;">com.sun.faces.renderkit.html_basic.BaseTableRenderer.createKey(UIComponent)</div>
<div class="t" style="top:601.14px;right:272.0px;margin-right:1.016px;letter-spacing:-1.016px;word-spacing:0.9px;">100</div>
<div class="t" style="top:601.14px;right:162.5px;margin-right:0.611px;letter-spacing:-0.611px;word-spacing:0.9px;">17,86 MB</div>
<div class="t" style="top:601.14px;right:52.0px;margin-right:0.852px;letter-spacing:-0.852px;word-spacing:0.9px;">0,94 %</div>
<div class="a" style="left:105px;top:634px;width:992px;height:1px;background:#ededed;"></div>
<svg style="left:173px;top:623px" width="6" height="9" viewBox="0 0 6 9"><path d="M0.6 0.8 L4.5 4.3 L0.6 7.8 Z" fill="#fff" stroke="#a3a3a3" stroke-width="1"/></svg>
<svg style="left:191.8px;top:622px" width="8" height="8" viewBox="0 0 8 8"><path d="M0.3 0.3 H4.6 L3.4 1.6 L7 5.2 Q7.6 6.2 6.8 6.9 Q6 7.5 5.1 6.9 L1.6 3.4 L0.3 4.6 Z" fill="#2f6fb8" stroke="#1c4f94" stroke-width="0.5"/><path d="M3.3 3.2 L6 5.9" stroke="#a9cdf2" stroke-width="1.1" stroke-linecap="round"/></svg>
<div class="t" style="top:619.14px;left:208.0px;letter-spacing:-0.1px;">java.io.ObjectInputStream$BlockDataInputStream.readUTFBody(long)</div>
<div class="t" style="top:619.14px;right:272.0px;margin-right:1.359px;letter-spacing:-1.359px;word-spacing:0.9px;">59</div>
<div class="t" style="top:619.14px;right:162.5px;margin-right:0.601px;letter-spacing:-0.601px;word-spacing:0.9px;">6,28 MB</div>
<div class="t" style="top:619.14px;right:52.0px;margin-right:0.852px;letter-spacing:-0.852px;word-spacing:0.9px;">0,33 %</div>
<div class="a" style="left:105px;top:652px;width:992px;height:1px;background:#ededed;"></div>
<svg style="left:173px;top:641px" width="6" height="9" viewBox="0 0 6 9"><path d="M0.6 0.8 L4.5 4.3 L0.6 7.8 Z" fill="#fff" stroke="#a3a3a3" stroke-width="1"/></svg>
<svg style="left:191.8px;top:640px" width="8" height="8" viewBox="0 0 8 8"><path d="M0.3 0.3 H4.6 L3.4 1.6 L7 5.2 Q7.6 6.2 6.8 6.9 Q6 7.5 5.1 6.9 L1.6 3.4 L0.3 4.6 Z" fill="#2f6fb8" stroke="#1c4f94" stroke-width="0.5"/><path d="M3.3 3.2 L6 5.9" stroke="#a9cdf2" stroke-width="1.1" stroke-linecap="round"/></svg>
<div class="t" style="top:637.14px;left:208.0px;letter-spacing:-0.134px;">com.bea.netuix.state.DefaultStateKey.getKey()</div>
<div class="t" style="top:637.14px;right:272.0px;margin-right:1.359px;letter-spacing:-1.359px;word-spacing:0.9px;">20</div>
<div class="t" style="top:637.14px;right:162.5px;margin-right:0.601px;letter-spacing:-0.601px;word-spacing:0.9px;">5,37 MB</div>
<div class="t" style="top:637.14px;right:52.0px;margin-right:0.852px;letter-spacing:-0.852px;word-spacing:0.9px;">0,28 %</div>
<div class="a" style="left:105px;top:670px;width:992px;height:1px;background:#ededed;"></div>
<svg style="left:173px;top:659px" width="6" height="9" viewBox="0 0 6 9"><path d="M0.6 0.8 L4.5 4.3 L0.6 7.8 Z" fill="#fff" stroke="#a3a3a3" stroke-width="1"/></svg>
<svg style="left:191.8px;top:658px" width="8" height="8" viewBox="0 0 8 8"><path d="M0.3 0.3 H4.6 L3.4 1.6 L7 5.2 Q7.6 6.2 6.8 6.9 Q6 7.5 5.1 6.9 L1.6 3.4 L0.3 4.6 Z" fill="#2f6fb8" stroke="#1c4f94" stroke-width="0.5"/><path d="M3.3 3.2 L6 5.9" stroke="#a9cdf2" stroke-width="1.1" stroke-linecap="round"/></svg>
<div class="t" style="top:655.14px;left:208.0px;letter-spacing:-0.051px;">com.bea.netuix.nf.factories.MetaFactoryHelper.createMethodKey(String, String)</div>
<div class="t" style="top:655.14px;right:272.0px;margin-right:0.688px;letter-spacing:-0.688px;word-spacing:0.9px;">8</div>
<div class="t" style="top:655.14px;right:162.5px;margin-right:0.601px;letter-spacing:-0.601px;word-spacing:0.9px;">4,80 MB</div>
<div class="t" style="top:655.14px;right:52.0px;margin-right:0.852px;letter-spacing:-0.852px;word-spacing:0.9px;">0,25 %</div>
<svg style="left:173px;top:677px" width="6" height="9" viewBox="0 0 6 9"><path d="M0.6 0.8 L4.5 4.3 L0.6 7.8 Z" fill="#fff" stroke="#a3a3a3" stroke-width="1"/></svg>
<svg style="left:191.8px;top:676px" width="8" height="8" viewBox="0 0 8 8"><path d="M0.3 0.3 H4.6 L3.4 1.6 L7 5.2 Q7.6 6.2 6.8 6.9 Q6 7.5 5.1 6.9 L1.6 3.4 L0.3 4.6 Z" fill="#2f6fb8" stroke="#1c4f94" stroke-width="0.5"/><path d="M3.3 3.2 L6 5.9" stroke="#a9cdf2" stroke-width="1.1" stroke-linecap="round"/></svg>
<div class="t" style="top:673.14px;left:208.0px;letter-spacing:-0.039px;">com.oracle.pitchfork.inject.Jsr250Metadata.applyInjections(Object, List)</div>
<div class="t" style="top:673.14px;right:272.0px;margin-right:1.359px;letter-spacing:-1.359px;word-spacing:0.9px;">27</div>
<div class="t" style="top:673.14px;right:162.5px;margin-right:0.601px;letter-spacing:-0.601px;word-spacing:0.9px;">4,61 MB</div>
<div class="t" style="top:673.14px;right:52.0px;margin-right:0.852px;letter-spacing:-0.852px;word-spacing:0.9px;">0,24 %</div>
<div class="a" style="left:1097px;top:484px;width:18px;height:205px;background:linear-gradient(90deg,#e9e9e9 0,#f1f1f1 30%,#f7f7f7 100%);"></div>
<svg style="left:1097px;top:484px" width="18" height="17" viewBox="0 0 18 17"><path d="M6.0 11 L9.5 7 L13.0 11 Z" fill="#404040"/></svg>
<svg style="left:1097px;top:672px" width="18" height="17" viewBox="0 0 18 17"><path d="M6.0 7 L9.5 11 L13.0 7 Z" fill="#404040"/></svg>
<div class="a" style="left:1098px;top:503px;width:14px;height:13px;border:1px solid #979797;border-radius:2px;background:linear-gradient(90deg,#f2f2f2 0,#e4e4e6 45%,#cfd0d3 55%,#dcdde0 100%);box-shadow:inset 0 0 0 1px #fafafa"></div>
<div class="a" style="left:496px;top:702px;width:84px;height:19px;background:#fff;border:1px solid #a0a0a0;border-top:none;border-radius:0 0 4px 4px"></div>
<div class="t" style="top:705.14px;left:109.6px;letter-spacing:-0.059px;">Overview</div>
<div class="a" style="left:163px;top:703px;width:1px;height:20px;background:#a0a0a0;"></div>
<div class="t" style="top:705.14px;left:185.2px;letter-spacing:-0.152px;">Garbage Collections</div>
<div class="a" style="left:295px;top:703px;width:1px;height:20px;background:#a0a0a0;"></div>
<div class="t" style="top:705.14px;left:318.7px;letter-spacing:-0.449px;">GC Times</div>
<div class="a" style="left:374px;top:703px;width:1px;height:20px;background:#a0a0a0;"></div>
<div class="t" style="top:705.14px;left:398.2px;letter-spacing:0.005px;">GC Configuration</div>
<div class="t" style="top:705.14px;left:518.5px;letter-spacing:0.157px;">Allocations</div>
<div class="t" style="top:705.14px;left:605.9px;letter-spacing:-0.158px;">Object Statistics</div>
<div class="a" style="left:694px;top:703px;width:1px;height:20px;background:#a0a0a0;"></div>
<svg style="left:0;top:0" width="720" height="732" viewBox="0 0 720 732"><g><g transform="translate(95.2,706.2) rotate(43.5)"><rect x="0" y="0" width="14.6" height="4.6" fill="#2fb52f"/><rect x="0" y="0" width="14.6" height="0.9" fill="#7fe07f"/><rect x="1" y="1.4" width="1.6" height="1.4" fill="#155a1c"/><rect x="3.4" y="1.4" width="1.6" height="1.4" fill="#155a1c"/><rect x="9.4" y="1.4" width="1.6" height="1.4" fill="#155a1c"/><rect x="11.8" y="1.4" width="1.6" height="1.4" fill="#155a1c"/><rect x="0.6" y="4.6" width="1.6" height="1.3" fill="#f0d030"/><rect x="3.4" y="4.6" width="1.6" height="1.3" fill="#f0d030"/><rect x="9.2" y="4.6" width="1.6" height="1.3" fill="#f0d030"/><rect x="12" y="4.6" width="1.6" height="1.3" fill="#f0d030"/></g>
<path d="M95.6 715.2 L100.4 710.6" stroke="#9a5a14" stroke-width="2.3" stroke-linecap="round"/>
<circle cx="102.5" cy="708.3" r="3.1" fill="#dcdff2" stroke="#5c5c5c" stroke-width="1"/></g><g transform="translate(168,704)"><path d="M1.2 3 H10.8 L10.1 13.6 Q10 14.9 8.8 14.9 H3.2 Q2 14.9 1.9 13.6 Z" fill="#2f74b8" stroke="#1f5a9a" stroke-width="0.6"/>
<path d="M3.3 4.4 L3.6 13 M6 4.4 V13.2 M8.7 4.4 L8.4 13" stroke="#dfeec8" stroke-width="1.4" stroke-linecap="round"/>
<path d="M0.5 2.6 Q0.5 1.4 1.6 1.4 H10.4 Q11.5 1.4 11.5 2.6 Q11.5 3.3 10.8 3.3 H1.2 Q0.5 3.3 0.5 2.6Z" fill="#3b80c4" stroke="#2565a8" stroke-width="0.5"/><path d="M1.4 2.7 H10.6" stroke="#d4ecec" stroke-width="0.8"/>
<rect x="4.2" y="0.2" width="3.6" height="1.4" rx="0.6" fill="#2f74b8"/></g><g transform="translate(300,704)"><path d="M1.2 3 H10.8 L10.1 13.6 Q10 14.9 8.8 14.9 H3.2 Q2 14.9 1.9 13.6 Z" fill="#2f74b8" stroke="#1f5a9a" stroke-width="0.6"/>
<path d="M3.3 4.4 L3.6 13 M6 4.4 V13.2 M8.7 4.4 L8.4 13" stroke="#dfeec8" stroke-width="1.4" stroke-linecap="round"/>
<path d="M0.5 2.6 Q0.5 1.4 1.6 1.4 H10.4 Q11.5 1.4 11.5 2.6 Q11.5 3.3 10.8 3.3 H1.2 Q0.5 3.3 0.5 2.6Z" fill="#3b80c4" stroke="#2565a8" stroke-width="0.5"/><path d="M1.4 2.7 H10.6" stroke="#d4ecec" stroke-width="0.8"/>
<rect x="4.2" y="0.2" width="3.6" height="1.4" rx="0.6" fill="#2f74b8"/></g><circle cx="312.2" cy="716" r="3.3" fill="#f4f8ff" stroke="#2a50a8" stroke-width="1.1"/><path d="M312.2 714 V716.2 H313.8" stroke="#2a50a8" stroke-width="0.8" fill="none"/><g transform="translate(378.5,704)"><path d="M1.2 3 H10.8 L10.1 13.6 Q10 14.9 8.8 14.9 H3.2 Q2 14.9 1.9 13.6 Z" fill="#2f74b8" stroke="#1f5a9a" stroke-width="0.6"/>
<path d="M3.3 4.4 L3.6 13 M6 4.4 V13.2 M8.7 4.4 L8.4 13" stroke="#dfeec8" stroke-width="1.4" stroke-linecap="round"/>
<path d="M0.5 2.6 Q0.5 1.4 1.6 1.4 H10.4 Q11.5 1.4 11.5 2.6 Q11.5 3.3 10.8 3.3 H1.2 Q0.5 3.3 0.5 2.6Z" fill="#3b80c4" stroke="#2565a8" stroke-width="0.5"/><path d="M1.4 2.7 H10.6" stroke="#d4ecec" stroke-width="0.8"/>
<rect x="4.2" y="0.2" width="3.6" height="1.4" rx="0.6" fill="#2f74b8"/></g><rect x="386.2" y="708.5" width="8" height="10.2" fill="#fdfdfd" stroke="#7a7f88" stroke-width="0.8"/><path d="M387.8 711.5 H392.6 M387.8 713.5 H392.6 M387.8 715.5 H391" stroke="#8a96a8" stroke-width="0.8"/><path d="M391 718.7 L394.2 715.5 V718.7Z" fill="#e8a838"/><g transform="translate(499,703.6)"><circle cx="7" cy="9.2" r="6.9" fill="url(#pg)"/>
<path d="M1.2 12.6 A6.9 6.9 0 0 0 12.9 12.4" fill="none" stroke="#8db5e4" stroke-width="0.9" opacity="0.9"/>
<path d="M6.8 6.7 L2.5 1.7 A8.5 8.5 0 0 1 12.4 1.9 Z" fill="#e60a1e" stroke="#ffffff" stroke-width="1.1" paint-order="stroke"/>
<path d="M8.7 7.9 L12.8 2.9 A8 8 0 0 1 16 7.9 Z" fill="#27a0b8" stroke="#ffffff" stroke-width="1.1" paint-order="stroke"/></g><g><defs><radialGradient id="orb" cx="0.35" cy="0.3" r="0.8"><stop offset="0" stop-color="#ffe6a0"/><stop offset="0.5" stop-color="#f5a020"/><stop offset="1" stop-color="#c86a08"/></radialGradient></defs>
<circle cx="590" cy="712" r="3.9" fill="url(#orb)"/>
<path d="M597 704 L601.3 711 H592.7 Z" fill="#3fae3f" stroke="#1f7a28" stroke-width="0.6"/>
<path d="M593 712.3 L599.5 711.5 L602 713 L602 718.5 L596 719.8 L593 718 Z" fill="#4a90e0" stroke="#2a5aa8" stroke-width="0.6"/><path d="M593 712.3 L599.5 711.5 L602 713 L596 714 Z" fill="#a8d0fa"/><path d="M596 714 V719.8" stroke="#2a5aa8" stroke-width="0.5"/></g></svg>
<div class="a" style="left:9px;top:151px;width:70px;height:82px;border:1px solid #6d7073;border-radius:4px;background:linear-gradient(#cfd4dc 0,#d6dbe3 12%,#d9dee6 50%,#dde2ea 100%);box-shadow:inset 0 1px 1px rgba(90,95,105,.35)"></div>
<svg style="left:0;top:0" width="86" height="732" viewBox="0 0 86 732"><defs>
<linearGradient id="twL" x1="0" y1="0" x2="1" y2="0"><stop offset="0" stop-color="#a2a9ba"/><stop offset="1" stop-color="#c4c9d5"/></linearGradient>
<linearGradient id="twF" x1="0" y1="0" x2="1" y2="0"><stop offset="0" stop-color="#e9ecf2"/><stop offset="0.7" stop-color="#e4e7ee"/><stop offset="1" stop-color="#c5cad6"/></linearGradient><linearGradient id="grnL" x1="0" y1="0" x2="1" y2="0"><stop offset="0" stop-color="#e4f46a"/><stop offset="0.45" stop-color="#a8de48"/><stop offset="1" stop-color="#58b628"/></linearGradient>
<linearGradient id="grn" x1="0" y1="0" x2="0" y2="1"><stop offset="0" stop-color="#b7ee5a"/><stop offset="1" stop-color="#4fae1e"/></linearGradient>
<radialGradient id="gC" cx="0.4" cy="0.3" r="0.8"><stop offset="0" stop-color="#8fdc8a"/><stop offset="0.5" stop-color="#2f9a44"/><stop offset="1" stop-color="#126a2a"/></radialGradient>
<radialGradient id="gauge" cx="0.5" cy="0.9" r="0.9"><stop offset="0" stop-color="#ffffff"/><stop offset="0.7" stop-color="#eef3f8"/><stop offset="1" stop-color="#c4d4e6"/></radialGradient>
<radialGradient id="gear" cx="0.5" cy="0.5" r="0.5"><stop offset="0" stop-color="#f7dcae"/><stop offset="0.55" stop-color="#efc88c"/><stop offset="0.8" stop-color="#e6b878"/><stop offset="1" stop-color="#e9c390"/></radialGradient>
<linearGradient id="box1" x1="0" y1="0" x2="0" y2="1"><stop offset="0" stop-color="#e2b052"/><stop offset="1" stop-color="#c08a2c"/></linearGradient>
<linearGradient id="box2" x1="0" y1="0" x2="0" y2="1"><stop offset="0" stop-color="#d19c3c"/><stop offset="1" stop-color="#a87422"/></linearGradient>
<linearGradient id="pic" x1="0" y1="0" x2="0" y2="1"><stop offset="0" stop-color="#4f86d8"/><stop offset="1" stop-color="#0f2a6c"/></linearGradient>
<linearGradient id="win" x1="0" y1="0" x2="0" y2="1"><stop offset="0" stop-color="#bfdcf6"/><stop offset="1" stop-color="#eef6fd"/></linearGradient>
<linearGradient id="ply" x1="0" y1="0" x2="1" y2="1"><stop offset="0" stop-color="#8fd49a"/><stop offset="1" stop-color="#1e7a34"/></linearGradient>
<linearGradient id="lck" x1="0" y1="0" x2="0" y2="1"><stop offset="0" stop-color="#ffe27a"/><stop offset="0.5" stop-color="#f2b52c"/><stop offset="1" stop-color="#d99a18"/></linearGradient>
<filter id="sh" x="-30%" y="-30%" width="160%" height="160%"><feGaussianBlur stdDeviation="1.6"/></filter>
<g id="tower">
 <path d="M0.2 1.6 L8.8 3 L8.8 40.3 L0.2 38.4 Z" fill="url(#twL)"/>
 <path d="M8.8 3 L26 2.3 L26 40.6 L8.8 40.3 Z" fill="url(#twF)" stroke="#8f96aa" stroke-width="0.7"/>
 <path d="M0.2 1.6 L9.5 0.3 L26 2.3 L8.8 3 Z" fill="#c9cdd8" stroke="#8f96aa" stroke-width="0.5"/>
 <path d="M0.2 1.6 L8.8 3 L8.8 40.3 L0.2 38.4 Z" fill="none" stroke="#8f96aa" stroke-width="0.5"/>
 <rect x="10.3" y="4.6" width="14.4" height="19.4" fill="#f6f7fa" opacity="0.9"/>
 <path d="M10.3 9.6 H24.7 M10.3 12.6 H24.7" stroke="#c9cedb" stroke-width="1"/>
 <path d="M10.3 14 H24.7" stroke="#aab1c2" stroke-width="0.8"/>
 <path d="M10 25.6 H25 M10 29 H25 M10 32.4 H25 M10 35.8 H25 M10 38.6 H25" stroke="#b3bacb" stroke-width="1.5"/>
 <path d="M10 24.3 H25 M10 27.3 H25 M10 30.7 H25 M10 34.1 H25 M10 37.3 H25" stroke="#ffffff" stroke-width="0.8"/>
 <rect x="11.4" y="6.2" width="4.8" height="1.7" fill="#28a838"/>
 <rect x="16.6" y="6.6" width="7.6" height="0.9" fill="#c3c9d6"/>
 <rect x="19.9" y="16.9" width="2.6" height="1.4" fill="#ee1c24"/>
 <rect x="17.4" y="16.9" width="2.2" height="1.4" fill="#d6dae4"/>
</g>
</defs><g><rect x="23" y="75" width="45" height="1" fill="#8f8f8f"/><rect x="23" y="77" width="45" height="1" fill="#8f8f8f"/><rect x="23" y="79" width="45" height="1" fill="#8f8f8f"/><rect x="23" y="81" width="45" height="1" fill="#8f8f8f"/><rect x="23" y="83" width="45" height="1" fill="#8f8f8f"/><rect x="23" y="85" width="45" height="1" fill="#8f8f8f"/><rect x="23" y="87" width="45" height="1" fill="#8f8f8f"/><rect x="23" y="89" width="45" height="1" fill="#8f8f8f"/><rect x="23" y="91" width="45" height="1" fill="#8f8f8f"/><rect x="23" y="93" width="45" height="1" fill="#8f8f8f"/><rect x="23" y="95" width="45" height="1" fill="#8f8f8f"/><rect x="23" y="97" width="45" height="1" fill="#8f8f8f"/><rect x="23" y="99" width="45" height="1" fill="#8f8f8f"/><rect x="23" y="101" width="45" height="1" fill="#8f8f8f"/><rect x="23" y="103" width="45" height="1" fill="#8f8f8f"/><rect x="23" y="105" width="45" height="1" fill="#8f8f8f"/><rect x="23" y="107" width="45" height="1" fill="#8f8f8f"/><rect x="23" y="109" width="45" height="1" fill="#8f8f8f"/><rect x="23" y="74" width="1" height="37" fill="#b0b0b0"/><rect x="67" y="74" width="1.4" height="37" fill="#9a9a9a"/><rect x="56.0" y="108" width="1" height="4" fill="#808080"/><rect x="58.6" y="108" width="1" height="4" fill="#808080"/><rect x="61.2" y="108" width="1" height="4" fill="#808080"/><rect x="63.8" y="108" width="1" height="4" fill="#808080"/><rect x="66.4" y="108" width="1" height="4" fill="#808080"/><polyline points="25,74.6 31.5,74.6 33,86 35.5,101 39,95 42,93.5 46,92.5 51.5,92 56,88 60,86.3 62,87 64.5,92" fill="none" stroke="#e80000" stroke-width="1.1"/><polyline points="26,106 30,103.5 33,105 36,103 40,101.5 43,104 47,103.5 51,102.5 54,105 56,103.5 58,106 61,102.5 64,105" fill="none" stroke="#1010d0" stroke-width="1"/><ellipse cx="39" cy="123.5" rx="21" ry="1.8" fill="#000" opacity="0.35" filter="url(#sh)"/><path d="M19.5 122.3 A19.3 19.3 0 0 1 58.1 122.3 Z" fill="url(#gauge)" stroke="#7fa6d6" stroke-width="1.2"/><path d="M21.5 121 A17.3 17.3 0 0 1 28 108.5" fill="none" stroke="#4c98e0" stroke-width="1.8"/><path d="M54 112 A17.3 17.3 0 0 1 56.3 121" fill="none" stroke="#d8404a" stroke-width="1.8"/><circle cx="24.8" cy="119.5" r="0.75" fill="#56606e"/><circle cx="26.5" cy="114.9" r="0.75" fill="#56606e"/><circle cx="29.7" cy="111.1" r="0.75" fill="#56606e"/><circle cx="33.9" cy="108.7" r="0.75" fill="#56606e"/><circle cx="38.8" cy="107.8" r="0.75" fill="#56606e"/><circle cx="43.7" cy="108.7" r="0.75" fill="#56606e"/><circle cx="47.9" cy="111.1" r="0.75" fill="#56606e"/><circle cx="51.1" cy="114.9" r="0.75" fill="#56606e"/><circle cx="52.8" cy="119.5" r="0.75" fill="#56606e"/><path d="M39.6 121.6 L31 111.5" stroke="#333" stroke-width="1.2"/><rect x="19" y="121.6" width="39.6" height="1.3" fill="#a9b4c2"/></g><ellipse cx="36" cy="208" rx="24" ry="2.3" fill="#000" opacity="0.18" filter="url(#sh)"/><use href="#tower" x="39" y="163"/><g transform="translate(29.8,173.8) rotate(44.3)"><rect x="0" y="0" width="36" height="12" fill="#3fb54d"/><rect x="0" y="0" width="36" height="1.6" fill="#7fe07f"/><rect x="0" y="10" width="36" height="2" fill="#2d8e3a"/><rect x="2.0" y="2.6" width="4.2" height="6.6" fill="#2a4a2e"/><rect x="3.0" y="4" width="2.2" height="3.6" fill="#55705a"/><rect x="7.6" y="2.6" width="4.2" height="6.6" fill="#2a4a2e"/><rect x="8.6" y="4" width="2.2" height="3.6" fill="#55705a"/><rect x="13.2" y="2.6" width="4.2" height="6.6" fill="#2a4a2e"/><rect x="14.2" y="4" width="2.2" height="3.6" fill="#55705a"/><rect x="18.8" y="2.6" width="4.2" height="6.6" fill="#2a4a2e"/><rect x="19.8" y="4" width="2.2" height="3.6" fill="#55705a"/><rect x="24.4" y="2.6" width="4.2" height="6.6" fill="#2a4a2e"/><rect x="25.4" y="4" width="2.2" height="3.6" fill="#55705a"/><rect x="30.0" y="2.6" width="4.2" height="6.6" fill="#2a4a2e"/><rect x="31.0" y="4" width="2.2" height="3.6" fill="#55705a"/><rect x="1.2" y="12" width="2.6" height="2.7" fill="#e6c53a"/><rect x="5.5" y="12" width="2.6" height="2.7" fill="#e6c53a"/><rect x="9.8" y="12" width="2.6" height="2.7" fill="#e6c53a"/><rect x="14.1" y="12" width="2.6" height="2.7" fill="#e6c53a"/><rect x="18.4" y="12" width="2.6" height="2.7" fill="#e6c53a"/><rect x="22.7" y="12" width="2.6" height="2.7" fill="#e6c53a"/><rect x="27.0" y="12" width="2.6" height="2.7" fill="#e6c53a"/><rect x="31.3" y="12" width="2.6" height="2.7" fill="#e6c53a"/><rect x="0" y="12" width="36" height="0.7" fill="#277a33"/></g><ellipse cx="48" cy="286" rx="18" ry="2" fill="#000" opacity="0.14" filter="url(#sh)"/><ellipse cx="30" cy="297" rx="18" ry="1.6" fill="#000" opacity="0.12" filter="url(#sh)"/><rect x="32.2" y="251" width="35.6" height="29" fill="url(#win)" stroke="#aeb4bc" stroke-width="0.7"/><rect x="32" y="247.2" width="36" height="4.4" fill="#9c9c9c"/><rect x="32" y="247.2" width="36" height="1" fill="#b8b8b8"/><rect x="32" y="250.4" width="36" height="1.2" fill="#888888"/><rect x="32.6" y="251.6" width="34.8" height="5.2" fill="#fbfcfd"/><rect x="57.6" y="253.9" width="1.5" height="1.4" fill="#555"/><rect x="60.6" y="253.9" width="1.5" height="1.4" fill="#555"/><rect x="63.7" y="253.9" width="1.5" height="1.4" fill="#555"/><rect x="32" y="279.3" width="36" height="1.3" fill="#9a9fa6"/><text x="44.8" y="278" font-family="Liberation Sans, sans-serif" font-weight="bold" font-size="28" fill="#1f4f90" stroke="#1f4f90" stroke-width="0.5" textLength="10.6" lengthAdjust="spacingAndGlyphs">J</text><circle cx="31.7" cy="281.8" r="13.7" fill="url(#gC)" stroke="#0f6a2a" stroke-width="0.8"/><path d="M20.5 277.5 A12 12 0 0 1 43 277.5 A18 10 0 0 0 20.5 277.5Z" fill="#ffffff" opacity="0.22"/><text x="30.6" y="290.3" text-anchor="middle" font-family="Liberation Sans, sans-serif" font-weight="bold" font-size="24" fill="#f6fff2" stroke="#b4e6a0" stroke-width="0.7">C</text><ellipse cx="46" cy="381" rx="25" ry="2" fill="#000" opacity="0.14" filter="url(#sh)"/><polygon points="66.7,349.9 65.9,356.4 61.8,356.8 60.0,360.2 61.7,363.8 56.6,367.9 53.4,365.3 49.7,366.3 48.4,370.2 41.9,369.4 41.5,365.3 38.1,363.5 34.5,365.2 30.4,360.1 33.0,356.9 32.0,353.2 28.1,351.9 28.9,345.4 33.0,345.0 34.8,341.6 33.1,338.0 38.2,333.9 41.4,336.5 45.1,335.5 46.4,331.6 52.9,332.4 53.3,336.5 56.7,338.3 60.3,336.6 64.4,341.7 61.8,344.9 62.8,348.6" fill="#b9b5ad" stroke="#8f8b84" stroke-width="0.8" stroke-linejoin="round"/><polygon points="68.3,351.6 67.5,358.1 63.4,358.5 61.6,361.9 63.3,365.5 58.2,369.6 55.0,367.0 51.3,368.0 50.0,371.9 43.5,371.1 43.1,367.0 39.7,365.2 36.1,366.9 32.0,361.8 34.6,358.6 33.6,354.9 29.7,353.6 30.5,347.1 34.6,346.7 36.4,343.3 34.7,339.7 39.8,335.6 43.0,338.2 46.7,337.2 48.0,333.3 54.5,334.1 54.9,338.2 58.3,340.0 61.9,338.3 66.0,343.4 63.4,346.6 64.4,350.3" fill="#cfcbc3"/><polygon points="69.9,353.3 69.1,359.8 65.0,360.2 63.2,363.6 64.9,367.2 59.8,371.3 56.6,368.7 52.9,369.7 51.6,373.6 45.1,372.8 44.7,368.7 41.3,366.9 37.7,368.6 33.6,363.5 36.2,360.3 35.2,356.6 31.3,355.3 32.1,348.8 36.2,348.4 38.0,345.0 36.3,341.4 41.4,337.3 44.6,339.9 48.3,338.9 49.6,335.0 56.1,335.8 56.5,339.9 59.9,341.7 63.5,340.0 67.6,345.1 65.0,348.3 66.0,352.0" fill="#f2cf9c" stroke="#fff4e2" stroke-width="1.3" stroke-linejoin="round"/><circle cx="50.6" cy="354.3" r="14.4" fill="url(#gear)"/><circle cx="50.6" cy="354.3" r="11.6" fill="none" stroke="#fbe9cc" stroke-width="1.6"/><circle cx="50.6" cy="354.3" r="10.3" fill="#efc27c" stroke="#d9a45e" stroke-width="0.8"/><circle cx="50.6" cy="354.3" r="3.9" fill="#f4d8ac" stroke="#d0a060" stroke-width="0.6"/><circle cx="50.6" cy="354.3" r="2.4" fill="#5a3d22"/><circle cx="50.6" cy="354.3" r="1" fill="#1e140a"/><path d="M21.3 361 L40.5 370.6 L21.3 380.5 Z" fill="url(#ply)" stroke="#d8e6b8" stroke-width="1.1" stroke-linejoin="round"/><path d="M57.8 370 V364.6 A4.9 4.9 0 0 1 67.6 364.6 V370" fill="none" stroke="#8f9094" stroke-width="2.8"/><path d="M57.3 370 V364.6 A5.4 5.4 0 0 1 62 359.4" fill="none" stroke="#d9dadc" stroke-width="0.9"/><path d="M60.5 366.5 L65.5 362" stroke="#f0ead0" stroke-width="2.2"/><rect x="54.4" y="369.4" width="16.2" height="11" rx="0.8" fill="url(#lck)" stroke="#d08a10" stroke-width="0.9"/><rect x="55.3" y="370.3" width="14.4" height="9.2" fill="none" stroke="#fff0b0" stroke-width="0.7" opacity="0.9"/><path d="M56 372.8 H69 M56 375 H69 M56 377.2 H69" stroke="#fff3c0" stroke-width="0.7" opacity="0.8"/><rect x="61.7" y="372.6" width="1.8" height="4.4" fill="#6a4404"/><ellipse cx="42" cy="461" rx="24" ry="2" fill="#000" opacity="0.14" filter="url(#sh)"/><use href="#tower" x="36" y="418"/><path d="M18.2 444.5 L26.2 437.8 V442 H42 V447.8 H26.2 V451.8 Z" fill="url(#grnL)" stroke="#6fb22a" stroke-width="0.7"/><path d="M51.8 453.4 L44 446.4 V450.5 H28.4 V456.3 H44 V460.4 Z" fill="url(#grn)" stroke="#4c9c18" stroke-width="0.7"/><ellipse cx="42" cy="549" rx="24" ry="2" fill="#000" opacity="0.14" filter="url(#sh)"/><use href="#tower" x="36" y="504"/><defs><linearGradient id="ring" x1="0" y1="0" x2="0" y2="1"><stop offset="0" stop-color="#6fdc3c"/><stop offset="0.6" stop-color="#4cc630"/><stop offset="1" stop-color="#379f28"/></linearGradient><linearGradient id="rhead" x1="0" y1="0" x2="1" y2="0"><stop offset="0" stop-color="#f4f688"/><stop offset="0.5" stop-color="#dcee60"/><stop offset="1" stop-color="#7fd83c"/></linearGradient></defs><path d="M22.06 526.08 A15.4 15.4 0 1 0 33.4 521.1 L33.2 528.7 A7.8 7.8 0 1 1 27.66 531.22 Z" fill="url(#ring)" stroke="#3a9a28" stroke-width="0.6"/><path d="M19.2 536 A14.3 14.3 0 0 0 47.6 538.5 A14.3 16 0 0 1 19.2 536Z" fill="#2f9422" opacity="0.45"/><path d="M30.6 515.4 L21.7 522.7 L33 529.6 L35.6 528.9 Q40 529.2 41.6 532 L47 527 Q42.5 521.4 35 521 L31.8 521.1 Z" fill="url(#rhead)"/><path d="M30.6 515.4 L21.7 522.7 L26 520.6 L31 516.9 Z" fill="#5cc834"/><ellipse cx="42" cy="641" rx="27" ry="2.2" fill="#000" opacity="0.22" filter="url(#sh)"/><path d="M14.5 611.5 L29.5 606 L58 604 L67.5 605.5 L60 616 L24 618 Z" fill="#b98a34"/><path d="M35.5 588.5 L56 596 L60 606.5 L52 628 L28 619 Z" fill="#fbfcfe" stroke="#c9ced8" stroke-width="0.6"/><path d="M52.5 594.8 L60 606.5 L51.5 603.5 Z" fill="#f5a03a"/><path d="M36.5 596.5 L50 601.3 M35.5 599.8 L49 604.6" stroke="#8fa4cc" stroke-width="1.1"/><path d="M34.5 603.5 L53.5 610.8 L49 624.5 L30 617.2 Z" fill="url(#pic)"/><path d="M34.5 603.5 L53.5 610.8 L53 612.6 L34 605.3Z" fill="#8fc0f4"/><path d="M37 608 L32.5 616.5" stroke="#e8eefc" stroke-width="1"/><path d="M19.5 619 L41.5 626.5 L41.5 640.5 L19.5 631.5 Z" fill="url(#box1)"/><path d="M41.5 626.5 L64.5 617.5 L64.5 630 L41.5 640.5 Z" fill="url(#box2)"/><path d="M14.8 618.6 L24 613.6 L46 621 L41.5 627.8 Z" fill="#e0b25a"/><path d="M41.5 627.8 L46 621 L61.5 613 L68.3 619 Z" fill="#cf9c40"/><path d="M59 605.5 L67.5 605.5 L68.3 619 L61.5 613Z" fill="#d9a84a"/><path d="M14.5 611.5 L29.5 606 L24 613.6 L14.8 618.6Z" fill="#e6bb66"/></svg>
<div class="t" style="top:133.14px;left:23.8px;letter-spacing:-0.501px;">General</div>
<div class="t" style="top:219.14px;left:21.6px;letter-spacing:0.391px;">Memory</div>
<div class="t" style="top:305.14px;left:29.5px;letter-spacing:-0.129px;">Code</div>
<div class="t" style="top:391.14px;left:23.1px;letter-spacing:-0.289px;">Threads</div>
<div class="t" style="top:477.14px;left:35.5px;letter-spacing:0.742px;">I/O</div>
<div class="t" style="top:563.14px;left:24.8px;letter-spacing:-0.463px;">System</div>
<div class="t" style="top:649.14px;left:27.4px;letter-spacing:-0.597px;">Events</div>
</body></html>
